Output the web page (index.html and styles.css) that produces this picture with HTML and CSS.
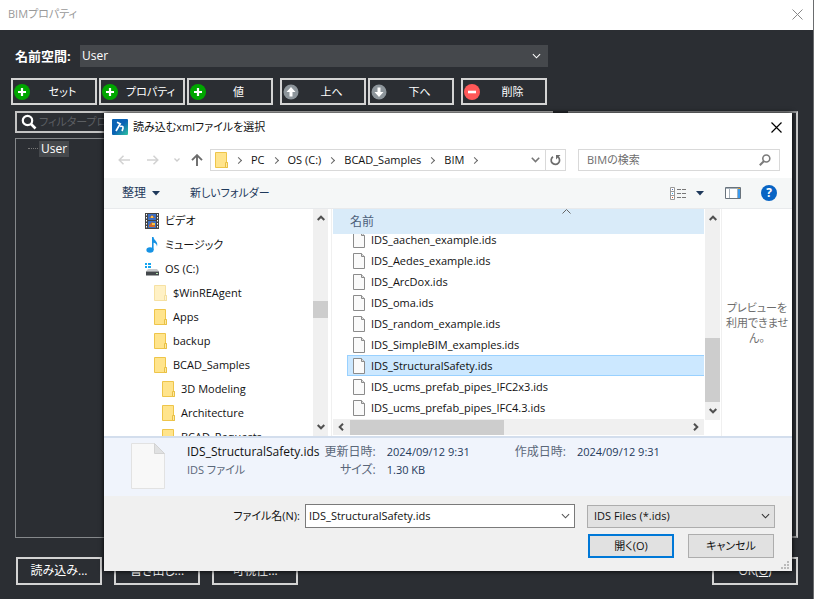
FILE: index.html
```html
<!DOCTYPE html>
<html lang="ja">
<head>
<meta charset="utf-8">
<title>BIMプロパティ</title>
<link rel="stylesheet" href="styles.css">
</head>
<body>
<svg class="defs" aria-hidden="true">
  <symbol id="folder" viewBox="0 0 14 16"><path d="M.5.5h11v10h1v5H.5z" fill="#ffe48c" stroke="#eec54a"/><path d="M10.500 15.500v-5h2v5z" fill="#ffe9a3" stroke="#e8c044"/></symbol>
  <symbol id="file" viewBox="0 0 12 16"><path d="M.5.5h8l3 3v12H.5z" fill="#fafafa" stroke="#8b8b8b"/><path d="M8.500.500v3h3" fill="#ddd" stroke="#8b8b8b"/></symbol>
  <symbol id="plus" viewBox="0 0 16 16"><circle cx="8" cy="8" r="8" fill="#00a600"/><path d="M8 4v8M4 8h8" stroke="#fff" stroke-width="2.200"/></symbol>
  <symbol id="minus" viewBox="0 0 16 16"><circle cx="8" cy="8" r="8" fill="#ff5858"/><path d="M4 8h8" stroke="#fff" stroke-width="2.600"/></symbol>
  <symbol id="arrow" viewBox="0 0 16 16"><circle cx="8" cy="8" r="7.500" fill="#8d959b"/><path d="M8 3L3.500 8H6.500v4.500h3V8h3z" fill="#fff"/></symbol>
  <symbol id="chev-down" viewBox="0 0 10 6"><path d="M1 1l4 4 4-4" fill="none" stroke="currentColor" stroke-width="1.200"/></symbol>
  <symbol id="sb-up" viewBox="0 0 8 6"><path d="M.700 5L4 1.700 7.300 5" fill="none" stroke="#505050" stroke-width="2"/></symbol>
  <symbol id="sb-left" viewBox="0 0 6 8"><path d="M5 .700L1.700 4 5 7.300" fill="none" stroke="#505050" stroke-width="2"/></symbol>
</svg>

<div class="window">
  <header class="window-title">
    <h1>BIMプロパティ</h1>
    <button class="close" aria-label="閉じる"><svg width="11" height="11" viewBox="0 0 11 11"><path d="M.500.500l10 10M10.500.500l-10 10" stroke="#888"/></svg></button>
  </header>
  <main class="props">
    <div class="namespace">
      <label for="ns">名前空間:</label>
      <div class="pick pick-dark">
        <select id="ns"><option>User</option></select>
        <svg width="9" height="6"><use href="#chev-down"/></svg>
      </div>
    </div>
    <div class="actions">
      <div class="group">
        <button class="dark"><svg width="16" height="16"><use href="#plus"/></svg><span>セット</span></button>
        <button class="dark"><svg width="16" height="16"><use href="#plus"/></svg><span>プロパティ</span></button>
        <button class="dark"><svg width="16" height="16"><use href="#plus"/></svg><span>値</span></button>
      </div>
      <div class="group">
        <button class="dark"><svg width="16" height="16"><use href="#arrow"/></svg><span>上へ</span></button>
        <button class="dark"><svg class="flip" width="16" height="16"><use href="#arrow"/></svg><span>下へ</span></button>
      </div>
      <div class="group">
        <button class="dark"><svg width="16" height="16"><use href="#minus"/></svg><span>削除</span></button>
      </div>
    </div>
    <div class="panels">
      <div class="left">
        <div class="filter">
          <svg width="16" height="16" viewBox="0 0 16 16"><circle cx="6.500" cy="6.500" r="4.700" fill="none" stroke="#fff" stroke-width="2.200"/><path d="M10 10l4.500 4.500" stroke="#fff" stroke-width="2.600"/></svg>
          <input type="text" aria-label="フィルター" placeholder="フィルタープロパティ">
        </div>
        <div class="sets"><span class="branch"></span><span class="node">User</span></div>
      </div>
      <div class="right"></div>
    </div>
    <footer class="window-foot">
      <button class="dark plain">読み込み...</button>
      <button class="dark plain">書き出し...</button>
      <button class="dark plain">可視性...</button>
      <button class="dark plain ok">OK(<u>O</u>)</button>
    </footer>
  </main>
</div>

<section class="dialog" role="dialog" aria-labelledby="dlg-title">
  <header class="dlg-title">
    <svg width="16" height="16" viewBox="0 0 16 16"><defs><linearGradient id="lg" x1="0" y1="0" x2="1" y2="1"><stop offset=".5" stop-color="#0a62b4"/><stop offset="1" stop-color="#2fc4a0"/></linearGradient></defs><rect width="16" height="16" rx="1" fill="url(#lg)"/><path d="M5 3.200l3.200 1.600L4 12M8 7.500c3.200-.800 4 .500 2 4.500" fill="none" stroke="#fff" stroke-width="1.700"/></svg>
    <h2 id="dlg-title">読み込むxmlファイルを選択</h2>
    <button class="close" aria-label="閉じる"><svg width="11" height="11" viewBox="0 0 11 11"><path d="M.500.500l10 10M10.500.500l-10 10" stroke="#000" stroke-width="1.200"/></svg></button>
  </header>

  <nav class="nav">
    <button aria-label="戻る"><svg width="12" height="10" viewBox="0 0 12 10"><path d="M12 5H1M5.500.700L1.200 5l4.300 4.300" fill="none" stroke="#d2d2d2" stroke-width="1.500"/></svg></button>
    <button class="forward" aria-label="進む"><svg width="12" height="10" viewBox="0 0 12 10"><path d="M0 5h11M6.500.700L10.800 5 6.500 9.300" fill="none" stroke="#d2d2d2" stroke-width="1.500"/></svg></button>
    <button class="recent" aria-label="最近の場所"><svg width="6" height="4" viewBox="0 0 6 4"><path d="M.500.500L3 3 5.500.500" fill="none" stroke="#ccc" stroke-width="1.300"/></svg></button>
    <button class="up" aria-label="上へ"><svg width="12" height="12" viewBox="0 0 12 12"><path d="M6 12V1.500M1 6.200L6 1.200l5 5" fill="none" stroke="#6b6b6b" stroke-width="1.900"/></svg></button>
    <div class="address">
      <svg width="14" height="16"><use href="#folder"/></svg>
      <ol>
        <li><a href="#">PC</a></li><li><a href="#">OS (C:)</a></li><li><a href="#">BCAD_Samples</a></li><li><a href="#">BIM</a></li><li></li>
      </ol>
      <button class="drop" aria-label="履歴"><svg width="9" height="6" viewBox="0 0 9 6"><path d="M.800.800l3.700 3.700L8.200.800" fill="none" stroke="#777" stroke-width="1.600"/></svg></button>
      <button class="refresh" aria-label="更新"><svg width="11" height="12" viewBox="0 0 11 12"><path d="M3 2.700a4.200 4.200 0 1 0 5 .200" fill="none" stroke="#6d6d6d" stroke-width="1.700"/><path d="M10.500 1H6v4.500z" fill="#6d6d6d"/></svg></button>
    </div>
    <div class="search">
      <input type="text" aria-label="検索" placeholder="BIMの検索">
      <svg width="12" height="12" viewBox="0 0 12 12"><circle cx="7.300" cy="4.500" r="3.500" fill="none" stroke="#7b7b7b" stroke-width="1.600"/><path d="M5 7L.800 11.200" stroke="#7b7b7b" stroke-width="2"/></svg>
    </div>
  </nav>

  <div class="toolbar">
    <button class="organize">整理 <svg width="8" height="5" viewBox="0 0 8 5"><path d="M0 0h8L4 4.500z" fill="#1e395b"/></svg></button>
    <button>新しいフォルダー</button>
    <span class="fill"></span>
    <button aria-label="表示方法"><svg width="17" height="13" viewBox="0 0 17 13"><path d="M.500.500h4v12h-4zM.500 4.500h4M.500 8.500h4" fill="#fff" stroke="#999"/><path d="M2 2h1v1H2z" fill="#5570b0"/><path d="M2 6h1v1H2z" fill="#38a4e8"/><path d="M2 10h1v1H2z" fill="#d05a28"/><path d="M7 2.500h4m1 0h4M7 6.500h4m1 0h4M7 10.500h4m1 0h4" stroke="#777"/></svg></button>
    <button class="views" aria-label="その他の表示方法"><svg width="8" height="5" viewBox="0 0 8 5"><path d="M0 0h8L4 4.500z" fill="#1e395b"/></svg></button>
    <button class="preview-toggle" aria-label="プレビュー"><svg width="16" height="12" viewBox="0 0 16 12"><path d="M.500.500h15v11H.500z" fill="#fff" stroke="#69737c"/><path d="M1 1.500h14" stroke="#a7b2bb"/><path d="M4.500 2v9M12.500 2v9" stroke="#a7b2bb"/><path d="M13 2h2v9h-2z" fill="#3b9bf0"/><path d="M13 1h2v1h-2z" fill="#e6a02c"/></svg></button>
    <button class="help" aria-label="ヘルプ">?</button>
  </div>

  <div class="panes">
    <ul class="tree">
      <li><svg width="14" height="16" viewBox="0 0 14 16"><path d="M0 0h14v16H0z" fill="#444"/><path d="M1.500 1v15M12.500 1v15" stroke="#fff" stroke-dasharray="1.500 1.500"/><path d="M3 1h8v6H3zM3 8h8v7H3z" fill="#3a6fc4"/><path d="M4 12l3-3 3 2v3H4zM4 5l3-3 3 3z" fill="#d06c2b"/><path d="M7 10h3v2H7zM6 3h2v2H6z" fill="#f3c648"/></svg>ビデオ</li>
      <li><svg width="14" height="16" viewBox="0 0 14 16"><ellipse cx="5" cy="13" rx="3.600" ry="2.700" fill="#1692e4"/><path d="M7 13V0h1.500c.500 4 5 4 3.500 9.500C11.800 7 10 6 8.600 5.800V13z" fill="#1692e4"/></svg>ミュージック</li>
      <li><svg width="14" height="16" viewBox="0 0 14 16"><path d="M0 2h2v2H0zM3 2h3v2H3zM0 5h2v2H0zM3 5h3v2H3z" fill="#16a5ef"/><path d="M3 8h9l2 2.500H1z" fill="#c7c9cb"/><path d="M1 10.500h13v4H1z" fill="#44484c"/><path d="M11 12h2v1h-2z" fill="#b4e6b0"/></svg>OS (C:)</li>
      <li class="d1 faded"><svg width="14" height="16"><use href="#folder"/></svg>$WinREAgent</li>
      <li class="d1"><svg width="14" height="16"><use href="#folder"/></svg>Apps</li>
      <li class="d1"><svg width="14" height="16"><use href="#folder"/></svg>backup</li>
      <li class="d1"><svg width="14" height="16"><use href="#folder"/></svg>BCAD_Samples</li>
      <li class="d2"><svg width="14" height="16"><use href="#folder"/></svg>3D Modeling</li>
      <li class="d2"><svg width="14" height="16"><use href="#folder"/></svg>Architecture</li>
      <li class="d2"><svg width="14" height="16"><use href="#folder"/></svg>BCAD_Requests</li>
    </ul>
    <div class="vbar tree-bar"><svg width="8" height="6"><use href="#sb-up"/></svg><i></i><svg class="flip" width="8" height="6"><use href="#sb-up"/></svg></div>

    <div class="list">
      <div class="col-head"><span>名前</span><svg width="9" height="5" viewBox="0 0 9 5"><path d="M.500 4.500l4-4 4 4" fill="none" stroke="#666"/></svg></div>
      <ul class="files">
        <li><svg width="12" height="16"><use href="#file"/></svg>IDS_aachen_example.ids</li>
        <li><svg width="12" height="16"><use href="#file"/></svg>IDS_Aedes_example.ids</li>
        <li><svg width="12" height="16"><use href="#file"/></svg>IDS_ArcDox.ids</li>
        <li><svg width="12" height="16"><use href="#file"/></svg>IDS_oma.ids</li>
        <li><svg width="12" height="16"><use href="#file"/></svg>IDS_random_example.ids</li>
        <li><svg width="12" height="16"><use href="#file"/></svg>IDS_SimpleBIM_examples.ids</li>
        <li class="selected"><svg width="12" height="16"><use href="#file"/></svg>IDS_StructuralSafety.ids</li>
        <li><svg width="12" height="16"><use href="#file"/></svg>IDS_ucms_prefab_pipes_IFC2x3.ids</li>
        <li><svg width="12" height="16"><use href="#file"/></svg>IDS_ucms_prefab_pipes_IFC4.3.ids</li>
      </ul>
      <div class="hbar"><svg width="6" height="8"><use href="#sb-left"/></svg><i></i><svg class="flip" width="6" height="8"><use href="#sb-left"/></svg></div>
    </div>
    <div class="vbar list-bar"><svg width="8" height="6"><use href="#sb-up"/></svg><i></i><svg class="flip" width="8" height="6"><use href="#sb-up"/></svg></div>
    <aside class="preview">プレビューを利用できません。</aside>
  </div>

  <div class="details">
    <svg width="34" height="46" viewBox="0 0 34 46"><path d="M.500.500h23l10 10v35H.500z" fill="#f8f8f8" stroke="#e2e2e2"/><path d="M23.500.500v10h10z" fill="#e0e1e2" stroke="#d3d3d3"/></svg>
    <div class="file-name"><strong>IDS_StructuralSafety.ids</strong><span>IDS ファイル</span></div>
    <dl class="modified"><dt>更新日時:</dt><dd>2024/09/12 9:31</dd><dt>サイズ:</dt><dd>1.30 KB</dd></dl>
    <dl><dt>作成日時:</dt><dd>2024/09/12 9:31</dd></dl>
  </div>

  <form class="open-form">
    <div class="form-row">
      <label for="fname">ファイル名(N):</label>
      <div class="combo">
        <input id="fname" type="text" value="IDS_StructuralSafety.ids">
        <button type="button" aria-label="ファイル名の履歴"><svg width="9" height="6"><use href="#chev-down"/></svg></button>
      </div>
      <div class="pick pick-light">
        <select aria-label="ファイルの種類"><option>IDS Files (*.ids)</option></select>
        <svg width="9" height="6"><use href="#chev-down"/></svg>
      </div>
    </div>
    <div class="form-row buttons">
      <button type="button" class="light primary">開く(O)</button>
      <button type="button" class="light">キャンセル</button>
    </div>
    <svg class="grip" width="8" height="8" viewBox="0 0 8 8"><path d="M6 0h2v2H6zM3 3h2v2H3zM6 3h2v2H6zM0 6h2v2H0zM3 6h2v2H3zM6 6h2v2H6z" fill="#bbb"/></svg>
  </form>
</section>
</body>
</html>
```
FILE: styles.css
```css
* { box-sizing: border-box; }

body {
  margin: 0;
  color: #111;
  font: 11px/16px "Open Sans", "Noto Sans CJK JP", sans-serif;
  font-feature-settings: "palt";
}

button, input, select {
  margin: 0;
  padding: 0;
  border: 0;
  background: none;
  color: inherit;
  font: inherit;
  font-feature-settings: inherit;
}

ul, ol, dl, dd, h1, h2 { margin: 0; padding: 0; list-style: none; }
h1, h2, strong { font-size: inherit; font-weight: 400; }
a { color: inherit; text-decoration: none; }
svg { display: block; flex: none; }
.defs { position: absolute; width: 0; height: 0; }
.flip { transform: rotate(180deg); }

/* Property window */
.window {
  display: flex;
  flex-direction: column;
  min-height: 100vh;
  border-right: 1px solid #6a6c6e;
  background: #2b2e33;
  color: #fff;
}

.window-title {
  display: flex;
  align-items: center;
  justify-content: space-between;
  height: 30px;
  padding: 0 10px 2px 8px;
  background: #fff;
  color: #999;
}

.props {
  display: flex;
  flex: 1;
  flex-direction: column;
  padding: 15px 15px 14px 11px;
}

.namespace { display: flex; align-items: center; height: 22px; padding-left: 4px; font-size: 12px; }
.namespace label { width: 65px; font-size: 13px; font-weight: 700; }
.pick { position: relative; display: flex; align-items: center; }
.pick select { width: 100%; height: 100%; appearance: none; outline: 0; }
.pick svg { position: absolute; right: 7px; pointer-events: none; }
.pick-dark { width: 468px; height: 22px; background: #45484c; }
.pick-dark select { padding-left: 2px; }

.actions { display: flex; gap: 7px; margin: 11px 0 6px; }
.group { display: flex; gap: 2px; }

.dark {
  display: flex;
  align-items: center;
  width: 86px;
  height: 27px;
  padding-left: 1px;
  border: 2px solid #d4d4d4;
}
.dark span { flex: 1; text-align: center; white-space: nowrap; }
.plain { justify-content: center; height: 28px; padding: 0; font-size: 12px; }

.panels { display: flex; flex: 1; gap: 15px; padding-left: 4px; }
.left { display: flex; flex-direction: column; gap: 5px; width: 538px; }
.filter { display: flex; align-items: center; gap: 2px; height: 22px; padding-left: 4px; border: 2px solid #c4c4c4; }
.filter input { flex: 1; }
.filter input::placeholder { color: #5c5f63; opacity: 1; }
.sets { display: flex; flex: 1; align-items: flex-start; padding: 2px 12px; border: 1px solid #85888b; font-size: 12px; }
.branch { width: 10px; height: 8px; border-bottom: 1px dotted #777; }
.node { margin-left: 1px; padding: 0 2px; background: #45484c; }
.right { flex: 1; border: 1px solid #8e9092; border-right: 2px solid #c9c9c9; border-top-width: 2px; border-bottom-width: 2px; }

.window-foot { display: flex; gap: 12px; padding: 19px 0 0 5px; }
.ok { margin-left: auto; }

/* File dialog, floating over the window */
.dialog {
  position: absolute;
  inset: 113px 22px 28px 104px;
  display: flex;
  flex-direction: column;
  background: #fff;
  box-shadow: 0 0 5px #000;
}

.dlg-title { display: flex; align-items: center; gap: 5px; height: 28px; padding: 0 10px 0 8px; }
.dlg-title .close { margin-left: auto; }

.nav { display: flex; align-items: center; padding: 8px 12px 7px 14px; }
.forward { margin-left: 17px; }
.recent { margin-left: 15px; }
.up { margin-left: 11px; }
.address, .search { display: flex; align-items: center; height: 22px; border: 1px solid #d9d9d9; }
.address { flex: 1; margin: 0 12px 0 7px; padding-left: 4px; }
.address ol { display: flex; flex: 1; padding-left: 7px; }
.address li { display: flex; align-items: center; gap: 10px; margin-right: 8px; white-space: nowrap; }
.address li::before {
  width: 4px;
  height: 4px;
  border: solid #666;
  border-width: 1px 1px 0 0;
  content: "";
  transform: rotate(45deg);
}
.drop { padding-right: 5px; }
.refresh { display: grid; place-items: center; width: 20px; height: 20px; border-left: 1px solid #d9d9d9; }
.search { width: 202px; padding: 0 8px; }
.search input { flex: 1; min-width: 0; }
.search input::placeholder { color: #6d6d6d; opacity: 1; }

.toolbar {
  display: flex;
  align-items: center;
  height: 31px;
  padding: 0 15px 0 18px;
  border-bottom: 1px solid #e8eaec;
  background: #f5f7f7;
  color: #1e395b;
}
.toolbar button { display: flex; align-items: center; gap: 6px; }
.toolbar button + button { margin-left: 30px; }
.toolbar .organize { font-size: 12px; }
.toolbar .views { margin-left: 9px; }
.toolbar .preview-toggle { margin-left: 21px; }
.toolbar .help {
  justify-content: center;
  width: 16px;
  height: 16px;
  margin-left: 20px;
  border-radius: 50%;
  background: #0864c4;
  color: #fff;
  font-size: 12px;
  font-weight: 700;
}
.fill { flex: 1; }

.panes { display: flex; flex: 1; min-height: 0; }
.tree { width: 209px; overflow: hidden; }
.tree li { display: flex; align-items: center; gap: 6px; height: 24px; padding-left: 41px; }
.tree .d1 { gap: 5px; padding-left: 50px; }
.tree .d2 { gap: 5px; padding-left: 58px; }
.faded svg { opacity: .5; }

.vbar, .hbar { display: flex; align-items: center; justify-content: space-between; background: #f0f0f0; }
.vbar { flex-direction: column; width: 15px; padding: 6px 0; }
.vbar i { width: 15px; background: #cdcdcd; }
.tree-bar { margin-right: 3px; }
.tree-bar i { height: 17px; margin-top: 80px; margin-bottom: auto; }
.list-bar { margin: 0 1px 16px; }
.list-bar i { height: 64px; margin-top: auto; margin-bottom: 6px; }

.list { display: flex; flex: 1; flex-direction: column; min-width: 0; border-left: 1px solid #f0f0f0; padding: 0 0 1px 1px; }
.col-head { display: grid; align-items: center; height: 25px; padding-left: 17px; background: #d9ebf9; color: #4c607a; font-size: 12px; }
.col-head span, .col-head svg { grid-area: 1 / 1; }
.col-head svg { align-self: start; justify-self: center; margin-right: -78px; }
.files { display: flex; flex: 1; flex-direction: column; justify-content: flex-end; min-height: 0; padding: 0 0 1px 14px; overflow: hidden; }
.files li { display: flex; flex: none; align-items: center; gap: 6px; height: 21px; padding-left: 5px; border: 1px solid transparent; }
.files .selected { border-color: #99d1ff; border-right: 0; background: #cce8ff; }
.hbar { height: 16px; padding: 0 5px; }
.hbar i { width: 154px; height: 15px; margin-right: auto; margin-left: 6px; background: #cdcdcd; }

.preview {
  display: grid;
  place-items: center;
  width: 71px;
  border-left: 1px solid #f0f0f0;
  color: #6d6d6d;
  line-height: 15px;
  text-align: center;
}

.details {
  display: flex;
  height: 60px;
  padding: 5px 27px;
  border-top: 2px solid #d3deed;
  background: #f0f4fc;
  color: #5a6779;
  line-height: 18px;
}
.file-name { display: grid; align-content: start; margin-left: 22px; }
.file-name strong { color: #111; font-size: 12px; }
.details dl { display: grid; grid-template-columns: auto auto; align-content: start; column-gap: 11px; margin-left: 45px; }
.details .modified { margin-left: 5px; }
.details dt { font-size: 12px; text-align: right; }
.details dd { color: #1e395b; }

.open-form { position: relative; padding: 8px 17px 13px; background: #f0f0f0; }
.form-row { display: flex; align-items: center; }
.form-row label { flex: 1; padding-right: 5px; text-align: right; }
.combo { display: flex; width: 270px; height: 24px; border: 1px solid #7a7a7a; background: #fff; }
.combo input { flex: 1; min-width: 0; padding-left: 3px; outline: 0; }
.combo button { width: 18px; color: #555; }
.combo button svg { margin: auto; }
.pick-light { width: 188px; height: 23px; margin-left: 12px; border: 1px solid #adadad; background: #e1e1e1; color: #333; }
.pick-light select { padding-left: 6px; color: #111; }
.pick-light svg { right: 4px; }
.buttons { justify-content: flex-end; gap: 14px; margin-top: 6px; padding-right: 1px; }
.light { width: 86px; height: 24px; border: 1px solid #adadad; background: #e1e1e1; }
.primary { border: 2px solid #0078d7; }
.grip { position: absolute; right: 3px; bottom: 2px; }
```
